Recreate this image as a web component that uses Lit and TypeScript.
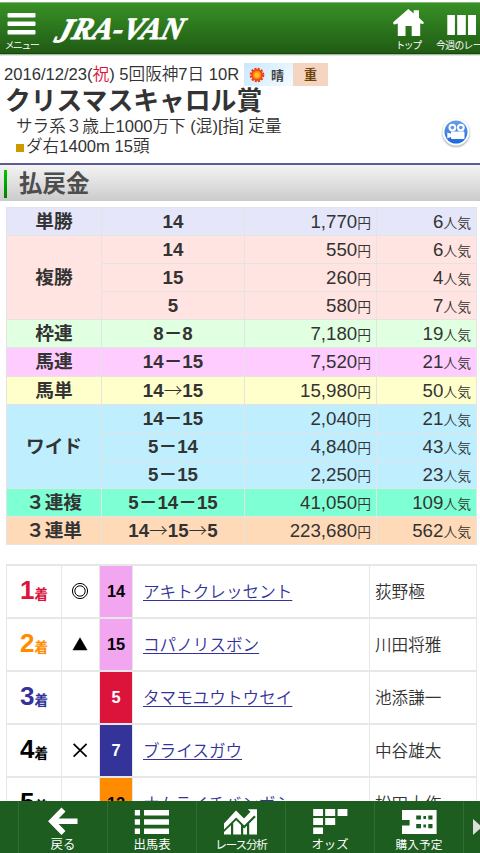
import {LitElement, css, html, svg} from 'lit';
import {customElement} from 'lit/decorators.js';
import {classMap} from 'lit/directives/class-map.js';

interface PayoutRow {
  numbers: string;
  yen: string;
  rank: string;
}

interface Payout {
  label: string;
  kind: string;
  rows: PayoutRow[];
}

interface Result {
  place: number;
  mark: string;
  number: number;
  frame: number;
  horse: string;
  jockey: string;
}

const payouts: Payout[] = [
  {label: '単勝', kind: 'tansho', rows: [{numbers: '14', yen: '1,770', rank: '6'}]},
  {
    label: '複勝',
    kind: 'fukusho',
    rows: [
      {numbers: '14', yen: '550', rank: '6'},
      {numbers: '15', yen: '260', rank: '4'},
      {numbers: '5', yen: '580', rank: '7'},
    ],
  },
  {label: '枠連', kind: 'wakuren', rows: [{numbers: '8－8', yen: '7,180', rank: '19'}]},
  {label: '馬連', kind: 'umaren', rows: [{numbers: '14－15', yen: '7,520', rank: '21'}]},
  {label: '馬単', kind: 'umatan', rows: [{numbers: '14→15', yen: '15,980', rank: '50'}]},
  {
    label: 'ワイド',
    kind: 'wide',
    rows: [
      {numbers: '14－15', yen: '2,040', rank: '21'},
      {numbers: '5－14', yen: '4,840', rank: '43'},
      {numbers: '5－15', yen: '2,250', rank: '23'},
    ],
  },
  {label: '３連複', kind: 'sanrenpuku', rows: [{numbers: '5－14－15', yen: '41,050', rank: '109'}]},
  {label: '３連単', kind: 'sanrentan', rows: [{numbers: '14→15→5', yen: '223,680', rank: '562'}]},
];

const results: Result[] = [
  {place: 1, mark: 'double', number: 14, frame: 8, horse: 'アキトクレッセント', jockey: '荻野極'},
  {place: 2, mark: 'triangle', number: 15, frame: 8, horse: 'コパノリスボン', jockey: '川田将雅'},
  {place: 3, mark: '', number: 5, frame: 3, horse: 'タマモユウトウセイ', jockey: '池添謙一'},
  {place: 4, mark: 'cross', number: 7, frame: 4, horse: 'ブライスガウ', jockey: '中谷雄太'},
  {place: 5, mark: '', number: 12, frame: 7, horse: 'ナムライチバンボシ', jockey: '松田大作'},
];

const marks: Record<string, unknown> = {
  double: svg`<circle cx="9" cy="9" r="7.6" /><circle cx="9" cy="9" r="5.2" />`,
  triangle: svg`<path d="M9 2.2L16.5 15.3H1.5z" fill="#000" stroke="none" />`,
  cross: svg`<path d="M2.6 2.8L15.6 15.6M15.6 2.8L2.6 15.6" stroke-width="1.7" />`,
};

@customElement('app-header')
export class AppHeader extends LitElement {
  static styles = css`
    :host {
      display: block;
      flex: none;
      box-sizing: border-box;
      height: 56px;
      padding-top: 2px;
      color: #fff;
      border-bottom: 1px solid #f0f0f0;
    }

    .bar {
      display: flex;
      box-sizing: border-box;
      height: 52px;
      border-top: 1px solid #7fbb72;
      border-bottom: 1px solid #17470d;
      background: linear-gradient(#389026, #205b14);
      box-shadow: 0 1px 1px #a5bba1;
      overflow: hidden;
    }

    .item {
      display: flex;
      flex-direction: column;
      flex: none;
      align-items: center;
      width: 43px;
    }

    .item--top {
      margin-left: auto;
      width: 54px;
    }

    .item--week {
      width: 50px;
      margin-right: -5px;
    }

    .label {
      font-size: 9.8px;
      letter-spacing: -1.4px;
      font-weight: 400;
      line-height: 15px;
      white-space: nowrap;
    }

    .label--week {
      align-self: flex-start;
      letter-spacing: -.6px;
      margin-left: 1px;
    }

    .logo {
      display: block;
      flex: none;
      margin-left: 5px;
    }

    .logo-text {
      font-family: "Liberation Serif", serif;
      font-style: italic;
      font-weight: bold;
      font-size: 31px;
      fill: #fff;
      stroke: #fff;
      stroke-width: .8;
    }

    .logo-initial {
      font-size: 34px;
    }
  `;

  render() {
    return html`
      <div class="bar">
        <div class="item">
          <svg width="43" height="35" fill="#fff">
            <rect x="7.5" y="10" width="28" height="4.4" rx="1" />
            <rect x="7.5" y="18.5" width="28" height="4.4" rx="1" />
            <rect x="7.5" y="27" width="28" height="4.4" rx="1" />
          </svg>
          <span class="label">メニュー</span>
        </div>
        <svg class="logo" width="150" height="50">
          <text class="logo-text" transform="translate(6 36) skewX(-16)" textLength="127" lengthAdjust="spacingAndGlyphs"><tspan class="logo-initial" dy="2.5">J</tspan><tspan dy="-2.5">RA-VAN</tspan></text>
        </svg>
        <div class="item item--top">
          <svg width="54" height="35" fill="#fff">
            <path d="M27.3 6L32.7 10.4V7.3H38V14.7L42.4 18.9C43.4 20.2 42 21.7 40.7 20.8L39.2 20.4V33H30.7V23H24.5V33H16.8V20.5L14.4 21.3C12.5 21.8 11.4 20 12.7 18.7z" />
          </svg>
          <span class="label">トップ</span>
        </div>
        <div class="item item--week">
          <svg width="50" height="35" fill="#fff">
            <rect x="12.3" y="12" width="7.6" height="20" />
            <rect x="22.2" y="12" width="8.6" height="20" />
            <rect x="33" y="12" width="8" height="20" />
          </svg>
          <span class="label label--week">今週のレース</span>
        </div>
      </div>
    `;
  }
}

@customElement('race-info')
export class RaceInfo extends LitElement {
  static styles = css`
    :host {
      display: flex;
      flex: none;
      box-sizing: border-box;
      height: 107px;
      padding-left: 4px;
      color: #333;
      font-size: 16.6px;
      white-space: nowrap;
    }

    .text {
      flex: 1;
    }

    .date {
      display: flex;
      align-items: center;
      height: 25px;
      padding-top: 6px;
      font-size: 16.6px;
    }

    .date-text {
      width: 240px;
      margin-top: -3px;
    }

    .holiday {
      color: #dc143c;
    }

    .badges {
      display: flex;
      height: 23px;
      font-size: 13px;
      font-weight: bold;
    }

    .weather {
      display: flex;
      align-items: center;
      box-sizing: border-box;
      width: 49px;
      padding-left: 5px;
      gap: 6px;
      background: linear-gradient(135deg, #c9e8fc, #f4fbff);
      color: #444;
    }

    .going {
      width: 35px;
      line-height: 23px;
      text-align: center;
      background: #f4d5c2;
      color: #70430c;
    }

    .name {
      margin: -4px 0 0 1px;
      font-size: 25.8px;
      line-height: 36px;
      height: 34px;
      font-weight: bold;
    }

    .line {
      height: 20px;
      line-height: 20px;
      padding-left: 12px;
    }

    .surface {
      display: inline-block;
      width: 8px;
      height: 8px;
      margin-right: 2px;
      background: #cc9900;
    }

    .movie {
      flex: none;
      margin: 61px 8px 0 0;
    }
  `;

  render() {
    return html`
      <div class="text">
        <div class="date">
          <span class="date-text">2016/12/23(<span class="holiday">祝</span>) 5回阪神7日 10R</span>
          <div class="badges">
            <div class="weather">
              <svg width="16" height="16" viewBox="-8 -8 16 16">
                <circle r="6.3" fill="none" stroke="#ee3418" stroke-width="2" stroke-dasharray="2 1.3" />
                <circle r="6" fill="#f44a14" />
                <circle r="4" fill="#ff8d18" />
                <circle r="2.5" fill="#ffc324" />
              </svg>
              <span>晴</span>
            </div>
            <div class="going">重</div>
          </div>
        </div>
        <h1 class="name">クリスマスキャロル賞</h1>
        <div class="line">サラ系３歳上1000万下 (混)[指] 定量</div>
        <div class="line"><span class="surface"></span>ダ右1400m 15頭</div>
      </div>
      <svg class="movie" width="32" height="34">
        <defs>
          <linearGradient id="lens" x2="0" y2="1">
            <stop offset="0" stop-color="#699fe5" />
            <stop offset="1" stop-color="#1968dc" />
          </linearGradient>
          <filter id="shadow" x="-20%" y="-20%" width="140%" height="150%">
            <feDropShadow dx="0" dy="1" stdDeviation="1" flood-color="#000" flood-opacity=".5" />
          </filter>
        </defs>
        <circle cx="16" cy="15" r="13.3" fill="#fff" filter="url(#shadow)" />
        <circle cx="16" cy="15" r="11.5" fill="url(#lens)" />
        <g fill="#fff">
          <circle cx="12.4" cy="10.6" r="3.9" />
          <circle cx="20.8" cy="10.6" r="3.9" />
          <path d="M11 14.5H23.5Q24.5 14.5 24.5 15.5V21Q24.5 22 23.5 22H12Q11 22 11 21V20L7.3 21.2V15.6L11 16.8z" />
        </g>
        <circle cx="12.4" cy="10.6" r="1.8" fill="#5c95e3" />
        <circle cx="20.8" cy="10.6" r="1.8" fill="#5c95e3" />
      </svg>
    `;
  }
}

@customElement('payout-table')
export class PayoutTable extends LitElement {
  static styles = css`
    :host {
      display: block;
      flex: none;
      margin: 6px 3px 0 6px;
    }

    .table {
      display: grid;
      grid-template-columns: 94px 142px 131px 99px;
      grid-auto-rows: 1fr;
      gap: 1px;
      box-sizing: border-box;
      width: 471px;
      height: 338px;
      padding: 1px;
      background: #e4e4e4;
      color: #333;
      font-size: 18.7px;
    }

    .cell {
      display: flex;
      align-items: center;
      justify-content: center;
      min-height: 0;
      line-height: 20px;
      white-space: nowrap;
    }

    .cell--label,
    .cell--numbers {
      padding-top: 1px;
      font-weight: bold;
    }

    .cell--value {
      justify-content: flex-end;
      align-items: baseline;
      line-height: 27px;
      padding-right: 5px;
    }

    .unit {
      font-size: 13.8px;
    }

    .arrow {
      font-family: "Noto Sans CJK JP", sans-serif;
      font-weight: 300;
      line-height: 1;
    }

    .tansho { background: #e6e6fa; }
    .fukusho { background: #ffe4e1; }
    .wakuren { background: #e1ffe1; }
    .umaren { background: #ffccff; }
    .umatan { background: #ffffcc; }
    .wide { background: #bfefff; }
    .sanrenpuku { background: #7fffd4; }
    .sanrentan { background: #ffdab9; }
    .span3 { grid-row: span 3; }
  `;

  renderNumbers(numbers: string) {
    return numbers
      .split(/(→)/)
      .map((part) => (part === '→' ? html`<span class="arrow">→</span>` : part));
  }

  render() {
    return html`
      <div class="table">
        ${payouts.map(
          (payout) => html`
            <div class="cell cell--label ${classMap({[payout.kind]: true, span3: payout.rows.length === 3})}">${payout.label}</div>
            ${payout.rows.map(
              (row) => html`
                <div class="cell cell--numbers ${payout.kind}"><span>${this.renderNumbers(row.numbers)}</span></div>
                <div class="cell cell--value ${payout.kind}">${row.yen}<span class="unit">円</span></div>
                <div class="cell cell--value ${payout.kind}">${row.rank}<span class="unit">人気</span></div>
              `
            )}
          `
        )}
      </div>
    `;
  }
}

@customElement('result-table')
export class ResultTable extends LitElement {
  static styles = css`
    :host {
      display: block;
      flex: none;
      margin: 19px 3px 0 6px;
    }

    .table {
      display: grid;
      grid-template-columns: 54px 37px 32px 236px 106px;
      grid-auto-rows: 51px;
      gap: 2px 1px;
      box-sizing: border-box;
      width: 471px;
      padding: 2px 1px;
      background: #e7e7e7;
      color: #333;
      font-size: 16.6px;
    }

    .cell {
      display: flex;
      align-items: center;
      justify-content: center;
      box-sizing: border-box;
      background: #fff;
      white-space: nowrap;
    }

    .cell--mark {
      padding: 0 2px 2px 0;
    }

    .cell--text {
      justify-content: flex-start;
      padding: 0 0 2px 5px;
    }

    .cell--horse {
      padding-left: 10px;
    }

    .horse {
      color: #333399;
      text-decoration: underline;
      text-decoration-thickness: 1px;
      text-underline-offset: 2px;
    }

    .place {
      align-items: baseline;
      line-height: 49px;
      font-size: 26px;
      font-weight: bold;
      color: #000;
    }

    .place-unit {
      font-size: 13.5px;
    }

    .place--1 { color: #dc143c; }
    .place--2 { color: #ff8c00; }
    .place--3 { color: #333399; }

    .frame {
      font-size: 16.4px;
      font-weight: bold;
      color: #000;
    }

    .frame--3 {
      background: #dc143c;
      color: #fff;
    }

    .frame--4 {
      background: #333399;
      color: #fff;
    }

    .frame--7 { background: #ff8c00; }
    .frame--8 { background: #f2a6f0; }
  `;

  render() {
    return html`
      <div class="table">
        ${results.map(
          (result) => html`
            <div class="cell place place--${result.place}">${result.place}<span class="place-unit">着</span></div>
            <div class="cell cell--mark">
              <svg width="18" height="18" fill="none" stroke="#000" stroke-width="1">${marks[result.mark]}</svg>
            </div>
            <div class="cell frame frame--${result.frame}">${result.number}</div>
            <div class="cell cell--text cell--horse"><a class="horse">${result.horse}</a></div>
            <div class="cell cell--text">${result.jockey}</div>
          `
        )}
      </div>
    `;
  }
}

const navItems = [
  {
    label: '戻る',
    icon: svg`<path d="M20.5 6.5L9 18.3L20.5 30M9.5 18.3H34.5" fill="none" stroke="#fff" stroke-width="5.6" />`,
  },
  {
    label: '出馬表',
    icon: svg`<path d="M2.8 7H8V12.4H2.8zM12 7H37V12.4H12zM2.8 16.3H8V21.7H2.8zM12 16.3H37V21.7H12zM2.8 25.5H8V31H2.8zM12 25.5H37V31H12z" />`,
  },
  {
    label: 'レース分析',
    icon: svg`<path d="M3 20.5L15 7.5L23 15.5L29.5 8.8L26.8 6.2H36V15.2L33.2 12.5L23.2 22.5L15.2 14.5L3 26.5zM3 31.5V29L10 22.2V31.5zM12.2 31.5V20L15.2 17.2L20 22V31.5zM22.2 31.5V24.5L23.2 25.5L26 22.8V31.5zM28.2 31.5V20.5L36 12.8V31.5z" />`,
  },
  {
    label: 'オッズ',
    icon: svg`<path d="M3.2 6H13V13H3.2zM15.2 6H25.2V13H15.2zM27.6 6H37.4V13H27.6zM3.2 15.1H13V22.1H3.2zM15.2 15.1H25.2V22.1H15.2zM3.2 24.5H13V31H3.2z" />`,
  },
  {
    label: '購入予定',
    icon: svg`<path fill-rule="evenodd" d="M3 7H37.6V31H3V22.5H10.6V17H3zM17.2 12.5V16.5H22V12.5zM24.4 13V16H27V13zM29.3 12.5V16.5H33.5V12.5zM17.2 21V25.2H22V21zM24.4 21.6V24.6H27V21.6zM29.3 21V25.2H33.5V21z" />`,
  },
];

@customElement('bottom-nav')
export class BottomNav extends LitElement {
  static styles = css`
    :host {
      display: flex;
      flex: none;
      height: 52px;
      padding-left: 18px;
      overflow: hidden;
      background: #1d5d20;
      color: #fff;
      font-weight: 400;
    }

    .item {
      display: flex;
      flex-direction: column;
      flex: none;
      align-items: center;
      box-sizing: border-box;
      width: 89px;
      border-left: 1px solid #2b7030;
      font-size: 12.4px;
      line-height: 18px;
      white-space: nowrap;
    }

    .item--medium {
      font-size: 11.7px;
    }

    .item--long {
      font-size: 11.6px;
      letter-spacing: -1.2px;
    }

    .icon {
      flex: none;
      fill: #fff;
    }

    .more {
      flex: none;
      border-left: 1px solid #2b7030;
    }
  `;

  render() {
    return html`
      ${navItems.map(
        (item) => html`
          <div class="item ${classMap({'item--medium': item.label.length === 4, 'item--long': item.label.length > 4})}">
            <svg class="icon" width="40" height="35" viewBox="0 -2 40 35">${item.icon}</svg>
            <span>${item.label}</span>
          </div>
        `
      )}
      <svg class="more" width="17" height="52"><path d="M9 18L18 26L9 34z" fill="#ddd" /></svg>
    `;
  }
}

@customElement('app-root')
export class AppRoot extends LitElement {
  static styles = css`
    :host {
      display: flex;
      flex-direction: column;
      width: 480px;
      height: 853px;
      overflow: hidden;
      background: #fff;
      font-family: "Liberation Sans", "Noto Sans CJK JP", sans-serif;
      font-weight: 350;
    }

    .content {
      display: flex;
      flex-direction: column;
      flex: 1;
      min-height: 0;
      overflow: hidden;
    }

    .section {
      display: flex;
      flex: none;
      align-items: center;
      box-sizing: border-box;
      height: 38px;
      margin: 0;
      padding: 2px 0 0 4px;
      border-top: 2px solid #5c5c99;
      background: linear-gradient(#f4f4f4, #cbcbcb);
      color: #4d4d4d;
      font-size: 23.5px;
      line-height: 30px;
      font-weight: bold;
    }

    .section::before {
      content: "";
      width: 3px;
      height: 28px;
      margin-right: 12px;
      background: linear-gradient(#00c800, #008000);
    }
  `;

  render() {
    return html`
      <app-header></app-header>
      <div class="content">
        <race-info></race-info>
        <h2 class="section">払戻金</h2>
        <payout-table></payout-table>
        <result-table></result-table>
      </div>
      <bottom-nav></bottom-nav>
    `;
  }
}
